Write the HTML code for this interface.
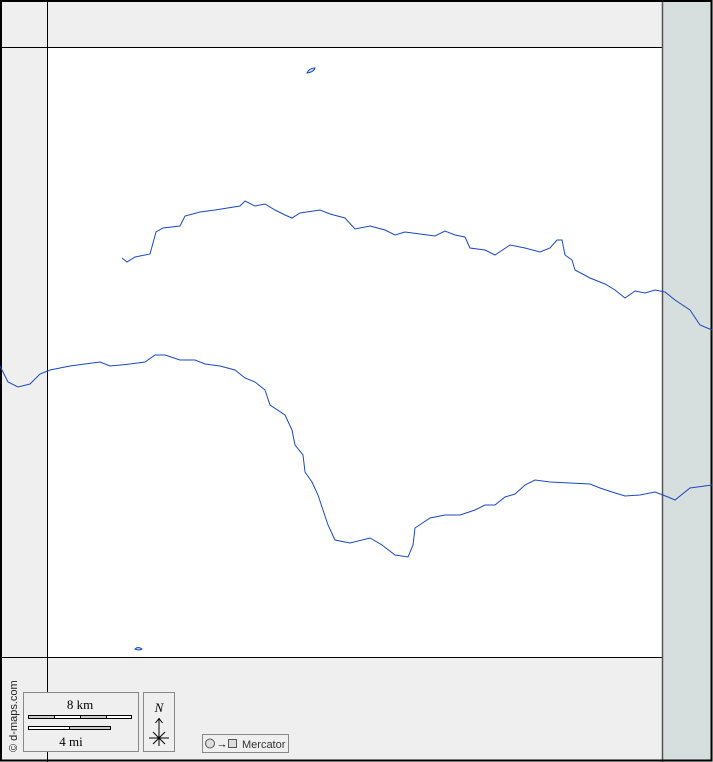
<!DOCTYPE html>
<html><head><meta charset="utf-8"><style>
html,body{margin:0;padding:0;background:#fff;}
svg{display:block;}
text{font-family:"Liberation Serif",serif;}
</style></head><body>
<svg width="713" height="762" viewBox="0 0 713 762" xmlns="http://www.w3.org/2000/svg">
<rect x="0" y="0" width="713" height="762" fill="#efefef"/>
<rect x="47" y="47" width="615" height="610" fill="#fff"/>
<rect x="662" y="0" width="51" height="762" fill="#d6dfdd"/>
<line x1="47.5" y1="0" x2="47.5" y2="762" stroke="#000" stroke-width="1"/>
<line x1="0" y1="47.5" x2="662" y2="47.5" stroke="#000" stroke-width="1"/>
<line x1="0" y1="657.5" x2="662" y2="657.5" stroke="#000" stroke-width="1"/>
<line x1="662.5" y1="0" x2="662.5" y2="762" stroke="#555" stroke-width="1.5"/>
<rect x="1" y="1" width="710.5" height="759.5" fill="none" stroke="#000" stroke-width="2"/>
<g fill="none" stroke="#1a48c0" stroke-width="1">
<polyline points="122,258 127,262 135,257 150,254 156,232 163,228 180,226 185,216 200,212 215,210 240,206 245,201 255,206 265,204 275,210 285,215 292,218 300,213 320,210 330,214 345,218 355,229 370,226 385,230 395,235 405,232 420,234 435,236 445,231 455,235 465,237 470,248 485,250 495,255 510,245 525,248 540,252 550,248 557,240 562,240 565,255 572,260 575,270 590,278 605,284 615,290 625,298 635,291 645,293 655,290 665,292 675,300 690,310 700,325 712,330"/>
<polyline points="0,366 8,382 18,387 30,384 40,374 50,370 70,366 85,364 100,362 110,366 130,364 145,362 155,355 165,355 180,360 195,360 205,364 220,366 235,370 245,378 255,382 265,390 270,405 285,415 292,430 295,445 303,455 305,472 312,482 318,495 323,510 328,525 335,540 350,543 370,538 382,545 395,555 408,557 413,545 415,528 430,518 445,515 460,515 475,510 485,505 495,505 505,497 515,494 525,485 535,480 550,482 570,483 590,484 600,488 612,492 625,496 640,495 655,492 668,497 675,500 690,488 712,485"/>
<path d="M307,73 q2,-5 8,-5 q-1,4 -8,5z" fill="#c8dcf0"/>
<path d="M135,649 q3,-3 7,0 q-3,2 -7,0z" fill="#c8dcf0"/>
</g>
<text transform="translate(17,752) rotate(-90)" font-size="11" fill="#222" style="font-family:'Liberation Sans',sans-serif">© d-maps.com</text>
<rect x="23.5" y="692.5" width="115" height="59" fill="#efefef" stroke="#888"/>
<text x="80" y="709" font-size="13" text-anchor="middle">8 km</text>
<rect x="28.5" y="715.5" width="103" height="3" fill="#fff" stroke="#000"/>
<rect x="28.5" y="715.5" width="26" height="3" fill="#ccc" stroke="#000"/>
<rect x="80.5" y="715.5" width="26" height="3" fill="#ccc" stroke="#000"/>
<rect x="28.5" y="726.5" width="82" height="3" fill="#fff" stroke="#000"/>
<rect x="69.5" y="726.5" width="41" height="3" fill="#ccc" stroke="#000"/>
<text x="71" y="746" font-size="13" text-anchor="middle">4 mi</text>
<rect x="143.5" y="692.5" width="31" height="59" fill="#efefef" stroke="#888"/>
<text x="159" y="712" font-size="13" font-style="italic" text-anchor="middle">N</text>
<g stroke="#000" stroke-width="1" fill="none">
<line x1="159" y1="719" x2="159" y2="746"/>
<polyline points="155.5,723 159,718.5 162.5,723"/>
<line x1="149" y1="738" x2="169" y2="738"/>
<line x1="153" y1="732" x2="165" y2="744"/>
<line x1="165" y1="732" x2="153" y2="744"/>
</g>
<rect x="202.5" y="734.5" width="86" height="18" fill="#efefef" stroke="#888"/>
<circle cx="210" cy="743.5" r="4.5" fill="#ddd" stroke="#555"/>
<text x="222" y="747.5" font-size="11" text-anchor="middle" style="font-family:'Liberation Sans',sans-serif">→</text>
<rect x="228.5" y="739.5" width="8" height="8" fill="#ddd" stroke="#555"/>
<text x="242" y="748" font-size="11" fill="#333" style="font-family:'Liberation Sans',sans-serif">Mercator</text>
</svg>
</body></html>
